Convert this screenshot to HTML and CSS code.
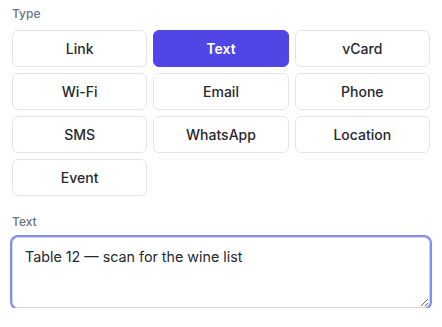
FILE: index.html
```html
<!DOCTYPE html>
<html>
<head>
  <title>QR Type</title>
  <link rel="stylesheet" href="styles.css">
</head>
<body>
  <div class="panel">
    <label class="field-label">Type</label>
    <div class="type-grid">
      <button class="type-btn">Link</button>
      <button class="type-btn active">Text</button>
      <button class="type-btn">vCard</button>
      <button class="type-btn">Wi-Fi</button>
      <button class="type-btn">Email</button>
      <button class="type-btn">Phone</button>
      <button class="type-btn">SMS</button>
      <button class="type-btn">WhatsApp</button>
      <button class="type-btn">Location</button>
      <button class="type-btn">Event</button>
    </div>

    <label class="field-label text-label" for="qrText">Text</label>
    <textarea id="qrText" class="text-input">Table 12 — scan for the wine list</textarea>
  </div>
</body>
</html>
```

FILE: styles.css
```css
* {
  margin: 0;
  padding: 0;
  box-sizing: border-box;
}

body {
  font-family: Inter, "Noto Sans", sans-serif;
  background-color: #ffffff;
  color: #1f2328;
}

.panel {
  padding: 6px 12px 0 12px;
  width: 442px;
}

.field-label {
  display: block;
  font-size: 12px;
  line-height: 16px;
  font-weight: 500;
  color: #6b7280;
  margin-bottom: 8px;
}

.type-grid {
  display: grid;
  grid-template-columns: repeat(3, 1fr);
  gap: 6px;
}

.type-btn {
  height: 37px;
  background-color: #ffffff;
  border: 1px solid #e7e5df;
  border-radius: 6px;
  font-family: inherit;
  font-size: 14px;
  font-weight: 500;
  color: #27272f;
  cursor: pointer;
}

.type-btn.active {
  background-color: #4f46e5;
  border-color: #4f46e5;
  color: #ffffff;
  font-weight: 600;
}

.text-label {
  margin-top: 18px;
  margin-bottom: 7px;
}

.text-input {
  display: block;
  width: 418px;
  height: 71px;
  padding: 9px 12px;
  border: 1px solid #d6d6d6;
  border-radius: 6px;
  box-shadow: 0 0 0 2px #818cf8;
  outline: none;
  font-family: inherit;
  font-size: 14.3px;
  line-height: 20px;
  color: #27272f;
  resize: vertical;
}
```
